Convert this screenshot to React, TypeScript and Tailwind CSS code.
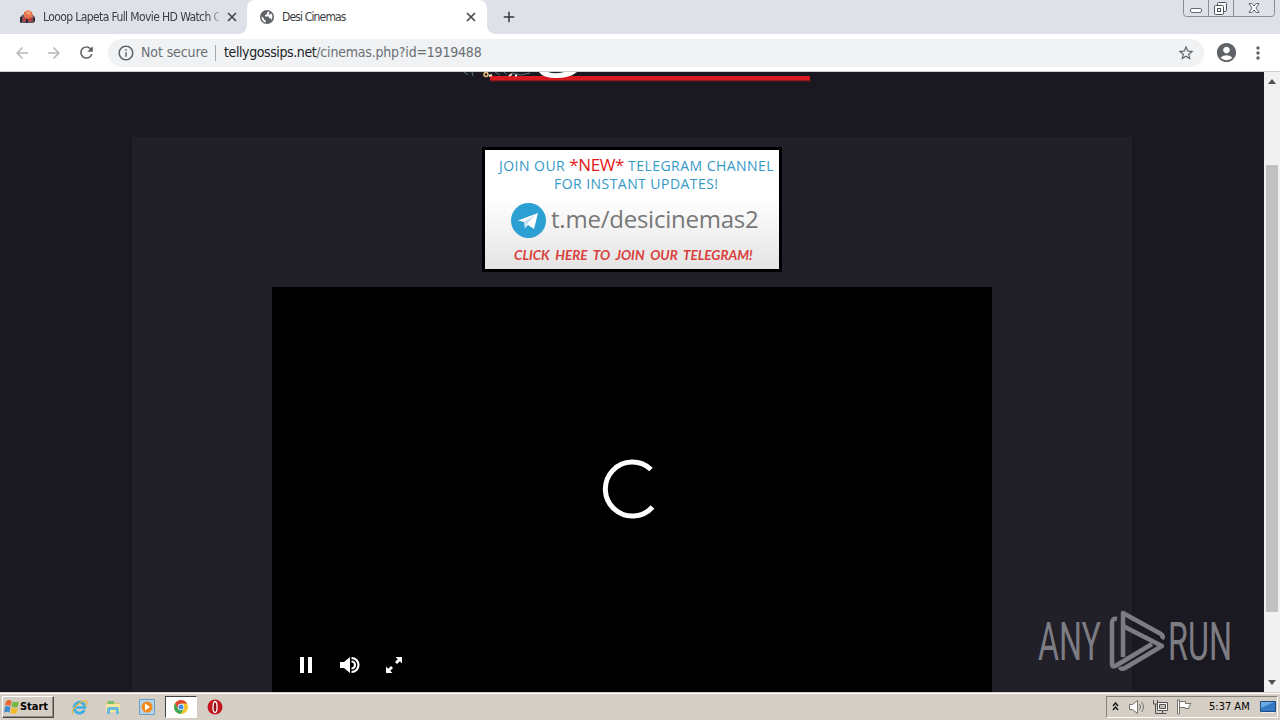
import type { ReactNode } from "react";
import { clsx } from "clsx";
import {
  MdAccountCircle,
  MdAdd,
  MdArrowBack,
  MdArrowForward,
  MdInfoOutline,
  MdMoreVert,
  MdRefresh,
  MdStarBorder,
} from "react-icons/md";

const uiFont = "font-['DejaVu_Sans_Condensed','DejaVu_Sans',sans-serif] [font-stretch:condensed]";

function GlobeIcon() {
  return (
    <svg width="14" height="14" viewBox="0 0 14 14" className="shrink-0">
      <circle cx="7" cy="7" r="7" fill="#5f6368" />
      <path d="M1.500 6.200 4 8.400v1.200l1.800 1.200v1.700C3.200 12 1.400 9.800 1.500 6.200Z" fill="#fff" />
      <path d="M8.200 1.600 6.900 2.800v1.400L5 4.900v1.500h3.600l.8 1.900h1.300l.7 1.600c1.400-2 1.400-4.800-.3-6.600l-1 1.100H8.800V3.200l1-.9Z" fill="#fff" />
    </svg>
  );
}

function CloseIcon({ className }: { className?: string }) {
  return (
    <svg width="14" height="14" viewBox="0 0 14 14" className={clsx("shrink-0", className)}>
      <path d="m3 3 8 8m0-8-8 8" stroke="#45484d" strokeWidth="1.700" />
    </svg>
  );
}

function MovieIcon() {
  return (
    <svg width="16" height="14" viewBox="0 0 16 14" className="shrink-0">
      <path d="M1 6 4 4h8l3 3v5l-2 1H0V8Z" fill="#6d5560" />
      <path d="M4 2 8 0l4 2 1 5-5 2-4-2Z" fill="#e4744f" />
      <path d="m6 2 3-1 2 3-3 1Z" fill="#f2a678" />
      <path d="M3 8h3v3H3Zm5 1 3-1 2 3H8Z" fill="#c83b38" />
      <path d="M0 7h2v5H0Zm6 2h2v4H6Zm7-1h2v3h-2Z" fill="#29293b" />
    </svg>
  );
}

function WindowButtons() {
  return (
    <svg width="94" height="17" viewBox="0 0 94 17" className="mr-1 ml-auto shrink-0" fill="none">
      <path d="M1.500 0v13.500q0 3 3 3h85q3 0 3-3V0M26.500 0v16.500M51.500 0v16.500" stroke="#8b8e98" />
      <rect x="8.500" y="8.500" width="11" height="4" rx="1.500" fill="#fff" stroke="#656973" />
      <rect x="35.500" y="2.500" width="9" height="9" rx="1" fill="#f5f5f7" stroke="#50535d" />
      <rect x="32.500" y="5.500" width="9" height="9" rx="1" fill="#fff" stroke="#50535d" />
      <rect x="35.500" y="8.500" width="3" height="3" stroke="#50535d" />
      <path d="M67 3.500h3l2 2.500 2-2.500h3L74 8l3 4.500h-3L72 10l-2 2.500h-3L70 8Z" fill="#fff" stroke="#656973" />
    </svg>
  );
}

function TabStrip() {
  return (
    <div className={clsx("flex h-[34px] bg-[#dee1e8] text-[12px] text-[#3c4043]", uiFont)}>
      <div className="flex h-[34px] w-[247px] items-center pl-5">
        <MovieIcon />
        <div className="ml-[7px] w-[176px] whitespace-nowrap tracking-[-0.6px] [mask-image:linear-gradient(to_right,#000_164px,transparent_180px)]">
          Looop Lapeta Full Movie HD Watch O
        </div>
        <CloseIcon className="ml-[6px]" />
      </div>
      <div className="relative flex h-[34px] w-[240px] items-center rounded-t-lg bg-white pl-[13px]">
        <span className="absolute bottom-0 -left-2 size-2 bg-[radial-gradient(circle_at_0_0,#dee1e8_7.5px,#fff_8px)]" />
        <span className="absolute -right-2 bottom-0 size-2 bg-[radial-gradient(circle_at_100%_0,#dee1e8_7.5px,#fff_8px)]" />
        <GlobeIcon />
        <span className="ml-2 w-[182px] whitespace-nowrap tracking-[-0.85px]">Desi Cinemas</span>
        <CloseIcon />
      </div>
      <MdAdd className="mt-2 ml-[13px] size-[18px] text-[#35383d]" />
      <WindowButtons />
    </div>
  );
}

function Toolbar() {
  return (
    <div className="flex h-[38px] items-center border-b border-[#d0d1d4] bg-white pl-[13px] text-[#5f6368]">
      <MdArrowBack className="size-[18px] text-[#b5b7ba]" />
      <MdArrowForward className="ml-[14px] size-[18px] text-[#b5b7ba]" />
      <MdRefresh className="ml-[14px] size-[19px]" />
      <div
        className={clsx(
          "ml-[12px] flex h-7 w-[1096px] items-center rounded-full bg-[#f0f2f4] pl-[9px] text-[14px] whitespace-nowrap",
          uiFont
        )}
      >
        <MdInfoOutline className="size-[18px]" />
        <span className="ml-[6px] w-[68px] tracking-[-0.1px] text-[#6b6f74]">Not secure</span>
        <span className="ml-[6px] h-4 w-px bg-[#a5a8ac]" />
        <span className="ml-[8px] tracking-[-0.2px] text-[#6b6f74]">
          <span className="tracking-[-0.4px] text-[#202124]">tellygossips.net</span>/cinemas.php?id=1919488
        </span>
        <MdStarBorder className="mr-[9px] ml-auto size-[18px]" />
      </div>
      <MdAccountCircle className="ml-[11px] size-[23px]" />
      <MdMoreVert className="ml-[10px] size-[20px]" />
    </div>
  );
}

function SiteLogo() {
  return (
    <svg width="350" height="14" viewBox="0 0 350 14" className="ml-[462px] shrink-0">
      <rect x="28" y="7" width="321" height="3" fill="#44161b" />
      <rect x="28" y="4" width="320" height="4.500" fill="#d81920" />
      <path d="M77 0h38q-7 6-21 6-13 0-17-6Z" fill="#fff" />
      <path d="M86 0h16q-9 2.500-16 0Z" fill="#24242b" />
      <path d="m2 0 4 3m4-3 1 4m22-4 5 3m4-3 3 3m5-2 9 2 9-2" stroke="#55777d" strokeWidth="1" fill="none" />
      <circle cx="24" cy="2.500" r="2" fill="none" stroke="#eec37c" strokeWidth="1.500" />
      <path d="m27 4 3-1m17 1 3-2m3 2 2-1" stroke="#f2e4cc" strokeWidth="2" fill="none" />
    </svg>
  );
}

function TelegramBanner() {
  return (
    <div className="mx-auto h-[125px] w-[300px] border-[3px] border-black bg-linear-to-b from-white from-40% to-[#e4e4e4] whitespace-nowrap">
      <div className="mt-[6px] ml-[14px] h-[18px] font-['Open_Sans',sans-serif] text-[14px] leading-[19px] font-medium tracking-[0.46px] text-[#3399c7]">
        JOIN OUR <span className="text-[17px] leading-none tracking-[-0.4px] text-[#e51720]">*NEW*</span> TELEGRAM CHANNEL
      </div>
      <div className="ml-[69px] h-[18px] font-['Open_Sans',sans-serif] text-[14px] leading-[19px] font-medium tracking-[0.45px] text-[#3399c7]">
        FOR INSTANT UPDATES!
      </div>
      <div className="mt-[11px] ml-[26px] flex h-[35px] items-center">
        <svg width="35" height="35" viewBox="0 0 35 35">
          <circle cx="17.500" cy="17.500" r="17.500" fill="#2ca0d3" />
          <path d="M7 17.500 27 10 23 26l-6-4-3 3-1-6Z" fill="#fff" />
          <path d="m13 19 11-7-8 9-2 4Z" fill="#bddced" />
        </svg>
        <span className="mb-[3px] ml-[5px] font-['Open_Sans',sans-serif] text-[24px] leading-none tracking-[-0.23px] text-[#777]">
          t.me/desicinemas2
        </span>
      </div>
      <div className="mt-[8px] ml-[29px] font-[Lato,sans-serif] text-[13.5px] leading-[18px] font-bold text-[#d9403d] italic [word-spacing:2.6px]">
        CLICK HERE TO JOIN OUR TELEGRAM!
      </div>
    </div>
  );
}

function Player() {
  return (
    <div className="mx-auto mt-[15px] flex h-[405px] w-[720px] flex-col bg-black">
      <svg width="60" height="60" viewBox="0 0 60 60" className="mt-[172px] ml-[330px]" fill="none">
        <path d="M49 10.500A27 27 0 1 0 50.500 48" stroke="#fff" strokeWidth="5" />
      </svg>
      <div className="mt-[136px] ml-7 flex h-5 items-center">
        <svg width="12" height="16" fill="#fff">
          <path d="M0 0h4v16H0ZM8 0h4v16H8Z" />
        </svg>
        <svg width="20" height="18" viewBox="0 0 20 18" className="ml-7" fill="none">
          <path d="M0 6h4l6-5v16l-6-5H0Z" fill="#fff" />
          <path d="M11.500 5.500a3.500 3.500 0 0 1 0 7M11.500 2a7 7 0 0 1 0 14" stroke="#fff" strokeWidth="2.200" />
        </svg>
        <svg width="16" height="16" viewBox="0 0 16 16" className="ml-[26px]" fill="#fff">
          <path d="M9.500 0H16v6.500l-2.200-2.200-2.800 2.800-2-2 2.800-2.800ZM0 9.500l2.200 2.200L5 8.900l2 2-2.800 2.800L6.500 16H0Z" />
        </svg>
      </div>
    </div>
  );
}

function Watermark() {
  return (
    <svg width="200" height="64" viewBox="0 0 200 64" className="absolute top-[537px] left-[1038px]" fill="none">
      <g fill="#7d7c83" fontFamily="Roboto, sans-serif" fontSize="53">
        <text x="0" y="51" textLength="63" lengthAdjust="spacingAndGlyphs">
          ANY
        </text>
        <text x="130" y="51" textLength="64" lengthAdjust="spacingAndGlyphs">
          RUN
        </text>
      </g>
      <g stroke="#7d7c83" strokeWidth="4.500" strokeLinejoin="round">
        <path d="M79 10q-5-1-5 4v41q0 4 5 1l35-21" />
        <path d="M85 48V4l38 21q3 2 1 5" />
        <path d="m85 17 39 20-37 22q-4 2-5-1" />
      </g>
    </svg>
  );
}

function Scrollbar() {
  return (
    <div className="flex h-full w-4 shrink-0 flex-col items-center bg-[#f1f1f1] py-[7px]">
      <svg width="8" height="5" fill="#505050">
        <path d="M0 5 4 0l4 5Z" />
      </svg>
      <div className="mt-[81px] h-[447px] w-3 bg-[#c1c1c1]" />
      <svg width="8" height="5" className="mt-auto" fill="#505050">
        <path d="M0 0h8L4 5Z" />
      </svg>
    </div>
  );
}

function TaskItem({ active, children }: { active?: boolean; children: ReactNode }) {
  return (
    <div
      className={clsx(
        "flex h-[22px] w-8 items-center justify-center",
        active && "border border-t-[#404040] border-r-white border-b-white border-l-[#404040] bg-white"
      )}
    >
      {children}
    </div>
  );
}

function Taskbar() {
  return (
    <div className={clsx("flex h-7 items-center bg-[#d4cec5] pt-[2px] pl-[2px] shadow-[inset_0_1px_#d4cec5,inset_0_2px_#fff]", uiFont)}>
      <div className="flex h-[22px] w-[52px] items-center border border-t-white border-r-[#504d49] border-b-[#504d49] border-l-white pl-px text-[11px] font-bold tracking-[-0.05px] text-black shadow-[inset_-1px_-1px_#8f8a83]">
        <svg width="16" height="16" viewBox="0 0 15 15" className="shrink-0">
          <path d="M2 2q3-2 5 0L6 7Q4 5 1 6Z" fill="#e76332" />
          <path d="M8 2q3 2 6 0l-1 5q-3 2-6 0Z" fill="#74b744" />
          <path d="M1 7q3-1 5 1l-1 5q-2-2-5 0Z" fill="#4189d0" />
          <path d="M7 8q3 2 6 0l-1 5q-3 2-6 0Z" fill="#efb928" />
        </svg>
        Start
      </div>
      <div className="ml-[9px] flex gap-[2px]">
        <TaskItem>
          <svg width="17" height="17" viewBox="0 0 17 17" fill="none">
            <path d="M13.500 11A5.500 5.500 0 1 1 14 8.500H4" stroke="#3eaee4" strokeWidth="2.700" />
            <path d="M2 15C-2 12 10 1 15 2c2 1 0 4-1 5" stroke="#dfb83c" strokeWidth="1.300" />
          </svg>
        </TaskItem>
        <TaskItem>
          <svg width="16" height="17" viewBox="0 0 16 17">
            <path d="M1 3h5l1 1h7v9H1Z" fill="#ddc56a" />
            <path d="M3 2h6v3H3Z" fill="#79bd73" />
            <path d="M1 5h14v8H1Z" fill="#f5e6a0" />
            <path d="M2 15v-5q0-2 2-2h8q2 0 2 2v5h-3v-4H5v4Z" fill="#69b9de" />
          </svg>
        </TaskItem>
        <TaskItem>
          <svg width="16" height="16" viewBox="0 0 16 16">
            <path d="M.5.5h15v15H.5Z" fill="#b4d2e8" stroke="#6c9fc4" />
            <circle cx="8" cy="8" r="5.500" fill="#f38a19" />
            <path d="m6 4.500 5 3.500-5 3.500Z" fill="#fff" />
          </svg>
        </TaskItem>
        <TaskItem active>
          <svg width="14" height="14" viewBox="0 0 14 14">
            <circle cx="7" cy="7" r="7" fill="#f4c52d" />
            <path d="M1 3.500A7 7 0 0 1 13.100 3.500H7L4 8.800Z" fill="#df4636" />
            <path d="M1 3.500A7 7 0 0 0 6.500 14L10 8.800H4Z" fill="#3ca65a" />
            <circle cx="7" cy="7" r="3.200" fill="#fff" />
            <circle cx="7" cy="7" r="2.500" fill="#4688e5" />
          </svg>
        </TaskItem>
        <TaskItem>
          <svg width="16" height="16" viewBox="0 0 16 16">
            <circle cx="8" cy="8" r="7.500" fill="#c4161f" />
            <ellipse cx="8" cy="8" rx="2" ry="5.500" fill="#8e1218" stroke="#fff" strokeWidth="1.300" />
          </svg>
        </TaskItem>
      </div>
      <div className="mr-[2px] ml-auto flex h-[22px] w-[172px] items-center border border-t-[#858078] border-r-white border-b-white border-l-[#858078] pl-[5px]">
        <svg width="7" height="9" viewBox="0 0 7 9" className="mb-[2px]" fill="none" stroke="#111" strokeWidth="1.400">
          <path d="M1 4 3.500 1 6 4M1 8l2.500-3L6 8" />
        </svg>
        <svg width="17" height="16" viewBox="0 0 17 16" className="ml-[10px]" fill="none" stroke="#77736d">
          <path d="M.5 5.500h3l5-4v13l-5-4h-3Z" fill="#fff" />
          <path d="M10.500 5q2 3 0 6M12.500 3q4 5 0 10" />
        </svg>
        <svg width="17" height="16" viewBox="0 0 17 16" className="ml-[6px]" fill="none" stroke="#55534f">
          <path d="M5.500 3.500h10v8h-10Z" fill="#fff" />
          <path d="M7.500 5.500h6v4h-6Z" fill="#c1beb9" />
          <path d="M1.500 1v4h4V1M3.500 5v9.500h11m-4-3v3" />
        </svg>
        <svg width="17" height="16" viewBox="0 0 17 16" className="ml-[7px]" fill="#fff" stroke="#77736d">
          <path d="M1.500 1v14h2V1ZM3.500 2.500h6v2h5.500l-2 2.500v2.500H9v-1H3.500Z" />
        </svg>
        <span className="mt-px ml-[16px] w-[42px] text-[11px] whitespace-nowrap text-black">5:37 AM</span>
        <svg width="16" height="14" viewBox="0 0 16 14" className="ml-[9px]">
          <path d="M.5 1.500h15v10H.5Z" fill="#3479c4" stroke="#204c86" />
          <path d="M1 2h13L1 8Z" fill="#6aa9e2" />
          <path d="M2 12h12v1H2Z" fill="#eee" />
        </svg>
      </div>
    </div>
  );
}

export default function App() {
  return (
    <div className="h-[720px] w-[1280px] overflow-hidden bg-[#1a1820]">
      <TabStrip />
      <Toolbar />
      <main className="relative flex h-[620px]">
        <div className="flex h-full w-[1264px] flex-col overflow-hidden">
          <SiteLogo />
          <section className="mx-auto mt-[51px] h-[555px] w-[1000px] bg-[#212028] pt-[10px]">
            <TelegramBanner />
            <Player />
          </section>
        </div>
        <Scrollbar />
        <Watermark />
      </main>
      <Taskbar />
    </div>
  );
}
